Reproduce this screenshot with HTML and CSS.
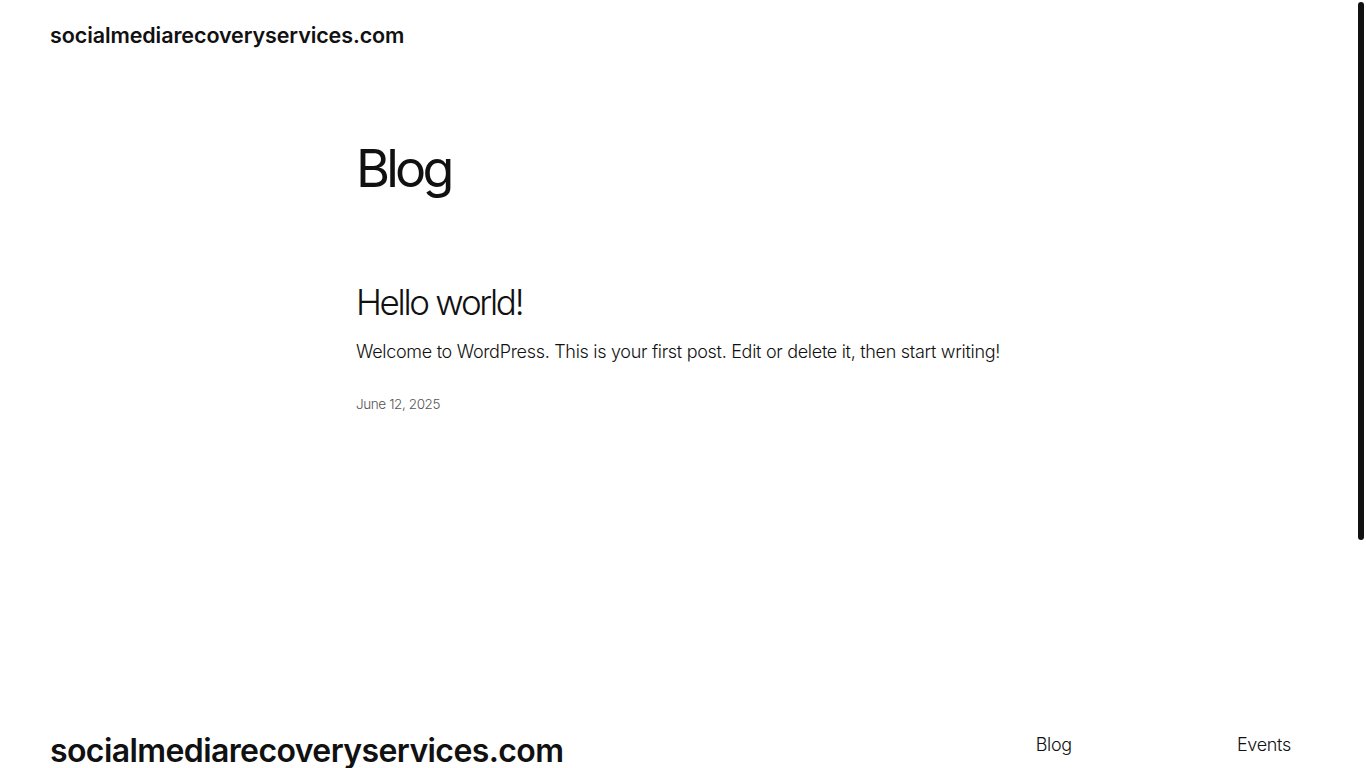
FILE: index.html
```html
<!DOCTYPE html>
<html lang="en">
<head>
<meta charset="utf-8">
<title>Blog – socialmediarecoveryservices.com</title>
<link rel="stylesheet" href="styles.css">
</head>
<body>
<header class="site-header">
  <a class="site-title" href="#">socialmediarecoveryservices.com</a>
</header>
<main class="main">
  <h1 class="page-title">Blog</h1>
  <article class="post">
    <h2 class="post-title">Hello world!</h2>
    <p class="post-excerpt">Welcome to WordPress. This is your first post. Edit or delete it, then start writing!</p>
    <div class="post-date">June 12, 2025</div>
  </article>
</main>
<footer class="site-footer">
  <a class="footer-title" href="#">socialmediarecoveryservices.com</a>
  <nav class="footer-nav">
    <a href="#" class="nav-blog">Blog</a>
    <a href="#" class="nav-events">Events</a>
  </nav>
</footer>
<div class="scroll-thumb"></div>
</body>
</html>
```

FILE: styles.css
```css
* { box-sizing: border-box; }
html, body { margin: 0; padding: 0; }
body {
  background: #ffffff;
  color: #111111;
  font-family: Inter, "Noto Sans", "Liberation Sans", sans-serif;
  height: 768px;
  overflow: hidden;
}
a { color: inherit; text-decoration: none; }

.site-header {
  height: 70px;
  padding: 22px 50px 0;
}
.site-title {
  font-size: 21.5px;
  font-weight: 600;
  letter-spacing: -0.1px;
}

.main {
  width: 654px;
  margin: 0 auto;
  padding-top: 67px;
  height: 650px;
}
.page-title {
  margin: 0;
  font-size: 52px;
  font-weight: 400;
  line-height: 64px;
  letter-spacing: -3.8px;
}
.post { padding-top: 79px; }
.post-title {
  margin: 0;
  font-size: 35px;
  font-weight: 300;
  line-height: 44px;
  letter-spacing: -2.3px;
}
.post-excerpt {
  margin: 14px 0 0;
  font-size: 18px;
  line-height: 28px;
  font-weight: 300;
  letter-spacing: -0.3px;
  white-space: nowrap;
}
.post-date {
  margin-top: 30px;
  font-size: 13.5px;
  font-weight: 300;
  color: #555555;
  letter-spacing: -0.4px;
}

.site-footer {
  display: flex;
  justify-content: space-between;
  align-items: flex-start;
  padding: 9px 75px 0 50px;
}
.footer-title {
  font-size: 32px;
  font-weight: 600;
  letter-spacing: -0.6px;
  line-height: 44px;
}
.footer-nav {
  display: flex;
  gap: 165px;
  font-size: 18px;
  font-weight: 300;
  letter-spacing: -0.3px;
  padding-top: 5px;
}

.scroll-thumb {
  position: fixed;
  top: 2px;
  right: 2px;
  width: 6px;
  height: 538px;
  border-radius: 3px;
  background: #111111;
}
```
